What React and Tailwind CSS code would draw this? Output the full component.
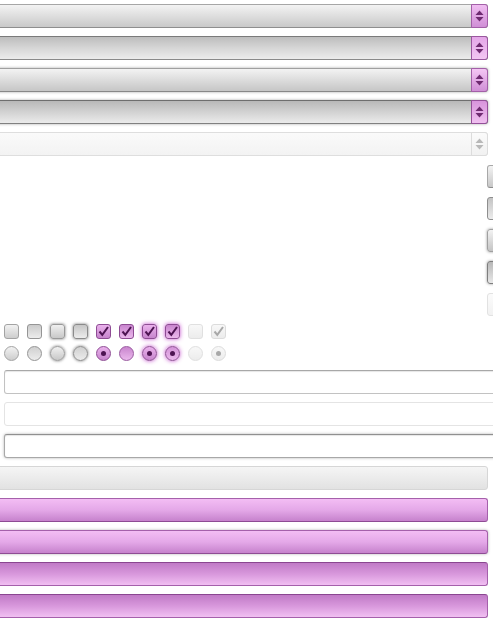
import React from "react";

function Arrows({ color }) {
  return (
    <svg width="9" height="12" viewBox="0 0 9 12">
      <polygon points="0.5,5 4.5,0.5 8.5,5" fill={color} />
      <polygon points="0.5,7 8.5,7 4.5,11.5" fill={color} />
    </svg>
  );
}

function Select({ variant }) {
  const body = {
    normal: "border-[#a6a6a6] border-b-[#8e8e8e] bg-gradient-to-b from-[#f3f3f3] to-[#c9c9c9]",
    pressed: "border-[#8a8a8a] border-t-[#7a7a7a] bg-gradient-to-b from-[#bdbdbd] via-[#d6d6d6] to-[#ececec]",
    hover: "border-[#a0a0a0] border-b-[#888] bg-gradient-to-b from-[#f3f3f3] to-[#c6c6c6] shadow-[0_0_3px_rgba(0,0,0,0.35)]",
    focus: "border-[#808080] border-t-[#6e6e6e] bg-gradient-to-b from-[#b8b8b8] via-[#d2d2d2] to-[#ebebeb] shadow-[0_0_3px_rgba(0,0,0,0.35)]",
    disabled: "border-[#dedede] bg-gradient-to-b from-[#fafafa] to-[#f3f3f3]",
  }[variant];
  const arrow = {
    normal: "border-[#a35fa8] bg-gradient-to-b from-[#f0bdf1] to-[#d08fd6]",
    pressed: "border-[#9a569f] bg-gradient-to-b from-[#e4a6e8] to-[#f2c6f2]",
    hover: "border-[#a35fa8] bg-gradient-to-b from-[#f4c6f4] to-[#d08fd6]",
    focus: "border-[#944f99] bg-gradient-to-b from-[#d894dc] to-[#f0c0f0]",
    disabled: "border-[#dcdcdc] bg-gradient-to-b from-[#fbfbfb] to-[#f1f1f1]",
  }[variant];
  return (
    <div className={`relative h-[24px] w-[504px] rounded-[3px] border ${body}`}>
      <div className={`absolute right-[-1px] top-[-1px] bottom-[-1px] w-[17px] rounded-r-[3px] border flex items-center justify-center ${arrow}`}>
        <Arrows color={variant === "disabled" ? "#b8b8b8" : "#6e2a70"} />
      </div>
    </div>
  );
}

function SideButton({ variant }) {
  const cls = {
    normal: "border-[#a8a8a8] border-b-[#8c8c8c] bg-gradient-to-b from-[#f3f3f3] to-[#c8c8c8]",
    pressed: "border-[#8e8e8e] bg-gradient-to-b from-[#c4c4c4] to-[#ececec]",
    hover: "border-[#a0a0a0] bg-gradient-to-b from-[#f3f3f3] to-[#c4c4c4] shadow-[0_0_3px_rgba(0,0,0,0.4)]",
    focus: "border-[#7e7e7e] bg-gradient-to-b from-[#b8b8b8] to-[#e8e8e8] shadow-[0_0_3px_rgba(0,0,0,0.4)]",
    disabled: "border-[#e2e2e2] bg-gradient-to-b from-[#fbfbfb] to-[#f2f2f2]",
  }[variant];
  return <div className={`h-[23px] w-[26px] rounded-[3px] border ${cls}`} />;
}

function Check({ variant }) {
  const base = "w-[15px] h-[15px] rounded-[3px] border flex items-center justify-center";
  const cls = {
    n: "border-[#a3a3a3] bg-gradient-to-b from-[#f2f2f2] to-[#cdcdcd]",
    p: "border-[#959595] bg-gradient-to-b from-[#cbcbcb] to-[#ececec]",
    h: "border-[#999] bg-gradient-to-b from-[#f0f0f0] to-[#c8c8c8] shadow-[0_0_3px_rgba(0,0,0,0.55)]",
    f: "border-[#8a8a8a] bg-gradient-to-b from-[#c6c6c6] to-[#ececec] shadow-[0_0_3px_rgba(0,0,0,0.55)]",
    cn: "border-[#8e4c94] bg-gradient-to-b from-[#eab2ec] to-[#c785cd]",
    cp: "border-[#8e4c94] bg-gradient-to-b from-[#c985ce] to-[#eab8ec]",
    ch: "border-[#8e4c94] bg-gradient-to-b from-[#eab2ec] to-[#c785cd] shadow-[0_0_4px_rgba(190,60,200,0.9)]",
    cf: "border-[#8e4c94] bg-gradient-to-b from-[#c985ce] to-[#eab8ec] shadow-[0_0_4px_rgba(190,60,200,0.9)]",
    d: "border-[#e0e0e0] bg-gradient-to-b from-[#f8f8f8] to-[#ececec]",
    dc: "border-[#dcdcdc] bg-gradient-to-b from-[#f8f8f8] to-[#ececec]",
  }[variant];
  const checked = variant.startsWith("c") || variant === "dc";
  return (
    <div className={`${base} ${cls}`}>
      {checked && (
        <svg width="13" height="13" viewBox="0 0 13 13">
          <path d="M2.5 6.5 L5.3 9.8 L11 2" fill="none" stroke={variant === "dc" ? "#a8a8a8" : "#4d1452"} strokeWidth="2" />
        </svg>
      )}
    </div>
  );
}

function Radio({ variant }) {
  const base = "w-[15px] h-[15px] rounded-full border flex items-center justify-center";
  const cls = {
    n: "border-[#a3a3a3] bg-gradient-to-b from-[#f2f2f2] to-[#cdcdcd]",
    p: "border-[#959595] bg-gradient-to-b from-[#d0d0d0] to-[#ececec]",
    h: "border-[#999] bg-gradient-to-b from-[#f0f0f0] to-[#c8c8c8] shadow-[0_0_3px_rgba(0,0,0,0.55)]",
    f: "border-[#8a8a8a] bg-gradient-to-b from-[#d0d0d0] to-[#ececec] shadow-[0_0_3px_rgba(0,0,0,0.55)]",
    cn: "border-[#8e4c94] bg-gradient-to-b from-[#eab2ec] to-[#c785cd]",
    cp: "border-[#9a5aa0] bg-gradient-to-b from-[#c985ce] to-[#eab8ec]",
    ch: "border-[#8e4c94] bg-gradient-to-b from-[#eab2ec] to-[#c785cd] shadow-[0_0_4px_rgba(190,60,200,0.9)]",
    cf: "border-[#8e4c94] bg-gradient-to-b from-[#d493d8] to-[#eab8ec] shadow-[0_0_4px_rgba(190,60,200,0.9)]",
    d: "border-[#e0e0e0] bg-gradient-to-b from-[#f8f8f8] to-[#ececec]",
    dc: "border-[#dcdcdc] bg-gradient-to-b from-[#f8f8f8] to-[#ececec]",
  }[variant];
  const dot = ["cn", "ch", "cf", "dc"].includes(variant);
  return (
    <div className={`${base} ${cls}`}>
      {dot && <div className={`w-[5px] h-[5px] rounded-full ${variant === "dc" ? "bg-[#a8a8a8]" : "bg-[#4d1452]"}`} />}
    </div>
  );
}

function Entry({ variant }) {
  const cls = {
    n: "border-[#c2c2c2] border-t-[#a8a8a8] shadow-[inset_0_1px_1px_rgba(0,0,0,0.1)]",
    d: "border-[#e4e4e4]",
    f: "border-[#a8a8a8] border-t-[#909090] shadow-[0_0_3px_rgba(0,0,0,0.3),inset_0_1px_1px_rgba(0,0,0,0.1)]",
  }[variant];
  return <div className={`h-[24px] w-[510px] rounded-[3px] border bg-white ${cls}`} />;
}

function Button({ variant }) {
  const cls = {
    d: "border-[#d6d6d6] bg-gradient-to-b from-[#f5f5f5] to-[#e2e2e2]",
    n: "border-[#a560ab] border-b-[#8e4c94] bg-gradient-to-b from-[#f3bdf4] via-[#e4a8e8] to-[#c682cc]",
    h: "border-[#a560ab] border-b-[#8e4c94] bg-gradient-to-b from-[#f3bdf4] via-[#e4a8e8] to-[#c682cc] shadow-[0_0_3px_rgba(0,0,0,0.3)]",
    p: "border-[#a560ab] border-t-[#8a4690] bg-gradient-to-b from-[#c07ac6] via-[#d898dc] to-[#f1bff2]",
  }[variant];
  return <div className={`h-[24px] w-[504px] rounded-[3px] border ${cls}`} />;
}

export default function App() {
  const checks = ["n", "p", "h", "f", "cn", "cp", "ch", "cf", "d", "dc"];
  return (
    <div className="w-[493px] h-[625px] overflow-hidden bg-white font-['Liberation_Sans',sans-serif]">
      <div className="flex flex-col gap-[8px] pt-[4px] -ml-[16px]">
        {["normal", "pressed", "hover", "focus", "disabled"].map((v) => (
          <Select key={v} variant={v} />
        ))}
      </div>
      <div className="flex flex-col items-end gap-[9px] mt-[9px] -mr-[20px]">
        {["normal", "pressed", "hover", "focus", "disabled"].map((v) => (
          <SideButton key={v} variant={v} />
        ))}
      </div>
      <div className="flex flex-col gap-[7px] mt-[8px] pl-[4px]">
        <div className="flex gap-[8px]">
          {checks.map((v) => (
            <Check key={v} variant={v} />
          ))}
        </div>
        <div className="flex gap-[8px]">
          {checks.map((v) => (
            <Radio key={v} variant={v} />
          ))}
        </div>
      </div>
      <div className="flex flex-col gap-[8px] mt-[9px] pl-[4px]">
        <Entry variant="n" />
        <Entry variant="d" />
        <Entry variant="f" />
      </div>
      <div className="flex flex-col gap-[8px] mt-[8px] -ml-[16px]">
        <Button variant="d" />
        <Button variant="n" />
        <Button variant="h" />
        <Button variant="p" />
        <Button variant="p" />
      </div>
    </div>
  );
}
